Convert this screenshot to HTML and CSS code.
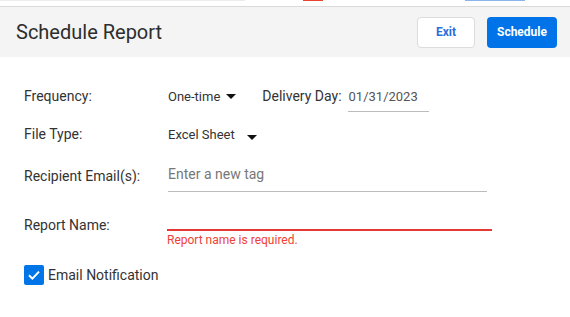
FILE: index.html
```html
<!DOCTYPE html>
<html lang="en">
<head>
    <title>Schedule Report</title>
    <link rel="stylesheet" href="styles.css">
</head>
<body>

    <div class="top-strip">
      <span class="strip-gray"></span>
      <span class="strip-red"></span>
      <span class="strip-blue"></span>
    </div>

    <div class="header">
      <p class="title">Schedule Report</p>
      <div class="header-actions">
        <button class="exit-button">Exit</button>
        <button class="schedule-button">Schedule</button>
      </div>
    </div>

    <div class="form">
      <div class="row row-frequency">
        <span class="label">Frequency:</span>
        <span class="select">One-time <span class="caret"></span></span>
        <span class="delivery-label">Delivery Day:</span>
        <span class="date-input">01/31/2023</span>
      </div>

      <div class="row row-filetype">
        <span class="label">File Type:</span>
        <span class="select">Excel Sheet <span class="caret caret-low"></span></span>
      </div>

      <div class="row row-email">
        <span class="label">Recipient Email(s):</span>
        <span class="tag-input">Enter a new tag</span>
      </div>

      <div class="row row-name">
        <span class="label">Report Name:</span>
        <div class="name-field">
          <div class="name-input"></div>
          <p class="error">Report name is required.</p>
        </div>
      </div>

      <label class="check-row">
        <span class="checkbox">
          <svg width="14" height="14" viewBox="0 0 14 14">
            <path d="M2 7.3 L5.4 10.6 L12 3.6" fill="none" stroke="white" stroke-width="2"/>
          </svg>
        </span>
        Email Notification
      </label>
    </div>

</body>
</html>
```

FILE: styles.css
```css
body {
  margin: 0;
  font-family: Roboto, Arial, sans-serif;
  color: #333;
  background-color: white;
}

.top-strip {
  position: relative;
  height: 6px;
  border-bottom: 1px solid #d9d9d9;
}

.strip-gray,
.strip-red,
.strip-blue {
  position: absolute;
  top: 0;
  height: 1px;
}

.strip-gray {
  left: 0;
  width: 245px;
  background-color: #ececec;
}

.strip-red {
  left: 303px;
  width: 20px;
  background-color: #e8452f;
}

.strip-blue {
  left: 465px;
  width: 60px;
  background-color: #8ab4ea;
}

.header {
  display: flex;
  align-items: center;
  justify-content: space-between;
  height: 50px;
  background-color: #f4f4f4;
  padding: 0 13px 0 16px;
}

.title {
  margin: 0;
  font-size: 20px;
  color: #2d2d2d;
}

.header-actions {
  display: flex;
  gap: 12px;
}

.exit-button,
.schedule-button {
  font-family: Roboto, Arial, sans-serif;
  font-size: 12px;
  font-weight: bold;
  height: 31px;
  border-radius: 4px;
  cursor: pointer;
}

.exit-button {
  width: 58px;
  background-color: white;
  border: 1px solid #dcdcdc;
  color: #2a6fdb;
}

.schedule-button {
  width: 70px;
  background-color: #0073e8;
  border: none;
  color: white;
}

.form {
  padding: 0 24px;
  font-size: 14px;
}

.row {
  display: flex;
  align-items: center;
}

.label {
  width: 144px;
  flex-shrink: 0;
}

.row-frequency {
  margin-top: 26px;
  height: 26px;
}

.select {
  display: flex;
  align-items: center;
  font-size: 13px;
}

.caret {
  display: inline-block;
  width: 0;
  height: 0;
  border-left: 5px solid transparent;
  border-right: 5px solid transparent;
  border-top: 5px solid #111;
  margin-left: 6px;
}

.caret-low {
  margin-left: 12px;
  margin-top: 6px;
}

.delivery-label {
  margin-left: 26px;
}

.date-input {
  margin-left: 6px;
  width: 80px;
  padding: 6px 0 7px 1px;
  border-bottom: 1px solid #bcbcbc;
  color: #555;
  font-size: 13px;
  margin-top: 3px;
}

.row-filetype {
  margin-top: 14px;
  height: 22px;
}

.row-email {
  margin-top: 14px;
}

.tag-input {
  width: 319px;
  padding: 7px 0 9px;
  border-bottom: 1px solid #bcbcbc;
  color: #777;
}

.row-name {
  margin-top: 25px;
  align-items: flex-start;
}

.name-field {
  margin-left: -1px;
}

.name-input {
  width: 325px;
  height: 12px;
  border-bottom: 2px solid #e53935;
}

.error {
  margin: 2px 0 0;
  font-size: 12px;
  color: #ef4135;
}

.check-row {
  display: flex;
  align-items: center;
  gap: 4px;
  margin-top: 18px;
}

.checkbox {
  display: flex;
  align-items: center;
  justify-content: center;
  width: 20px;
  height: 20px;
  border-radius: 2px;
  background-color: #0075e8;
}
```
